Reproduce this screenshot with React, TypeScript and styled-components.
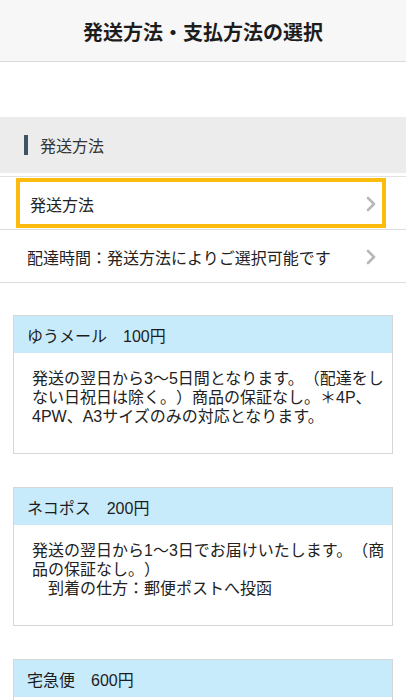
import React from "react";
import styled, { createGlobalStyle } from "styled-components";

const Global = createGlobalStyle`
  html, body { margin: 0; padding: 0; background: #fff; }
  body {
    font-family: "Liberation Sans", "Noto Sans CJK JP", sans-serif;
    color: #222;
    -webkit-font-smoothing: antialiased;
    text-spacing-trim: space-all;
  }
`;

const Page = styled.div`
  width: 406px;
  background: #fff;
`;

const TopBar = styled.header`
  height: 62px;
  background: #f7f7f7;
  border-bottom: 1px solid #dadada;
  display: flex;
  align-items: center;
  justify-content: center;
  font-size: 20px;
  font-weight: 700;
  color: #1d1d1d;
  padding-top: 2px;
  box-sizing: border-box;
`;

const Spacer = styled.div<{ h: number }>`
  height: ${(p) => p.h}px;
`;

const SectionHead = styled.div`
  height: 56px;
  background: #ececec;
  display: flex;
  align-items: center;
  gap: 12px;
  padding-left: 24px;
  font-size: 16px;
  color: #333;
`;

const Bar = styled.span`
  width: 4px;
  height: 20px;
  background: #3e5466;
`;

const List = styled.div`
  border-top: 1px solid #e2e2e2;
  margin-top: 3px;
`;

const Row = styled.div<{ $active?: boolean }>`
  height: 53px;
  border-bottom: 1px solid #dcdcdc;
  box-sizing: border-box;
  display: flex;
  align-items: stretch;
  padding: ${(p) => (p.$active ? "1px 20px 1px 16px" : "0 30px 0 27px")};
`;

const RowInner = styled.div<{ $active?: boolean }>`
  flex: 1;
  display: flex;
  align-items: center;
  justify-content: space-between;
  font-size: 16px;
  color: #222;
  box-sizing: border-box;
  ${(p) =>
    p.$active
      ? `border: 4px solid #fbbc0f; padding: 1px 6px 0 10px;`
      : `padding-top: 2px;`}
`;

const Chevron = () => (
  <svg width="10" height="16" viewBox="0 0 10 16" aria-hidden>
    <path
      d="M2 2 L8 8 L2 14"
      fill="none"
      stroke="#b8b8b8"
      strokeWidth="2.6"
      strokeLinecap="round"
      strokeLinejoin="round"
    />
  </svg>
);

const Cards = styled.div`
  display: flex;
  flex-direction: column;
  gap: 33px;
  padding: 32px 13px 0 13px;
`;

const Card = styled.section`
  border: 1px solid #d6d6d6;
  background: #fff;
`;

const CardHead = styled.div`
  height: 37px;
  background: #c8ebfb;
  display: flex;
  align-items: center;
  padding-left: 13px;
  font-size: 16px;
  color: #1d1d1d;
  white-space: pre;
`;

const CardBody = styled.div`
  padding: 16px 4px 27px 18px;
  font-size: 16px;
  line-height: 19px;
  color: #222;
  white-space: pre-wrap;
  line-break: strict;
`;

const shipping = [
  {
    title: "ゆうメール\u3000100円",
    body:
      "発送の翌日から3〜5日間となります。（配達をしない日祝日は除く。）商品の保証なし。＊4P、4PW、A3サイズのみの対応となります。",
  },
  {
    title: "ネコポス\u3000200円",
    body:
      "発送の翌日から1〜3日でお届けいたします。（商品の保証なし。）\n\u3000到着の仕方：郵便ポストへ投函",
  },
  {
    title: "宅急便\u3000600円",
    body: "発送の翌日から1〜2日でお届けいたします。",
  },
];

export default function App() {
  return (
    <Page>
      <Global />
      <TopBar>発送方法・支払方法の選択</TopBar>
      <Spacer h={55} />
      <SectionHead>
        <Bar />
        発送方法
      </SectionHead>
      <List>
        <Row $active>
          <RowInner $active>
            <span>発送方法</span>
            <Chevron />
          </RowInner>
        </Row>
        <Row>
          <RowInner>
            <span>配達時間：発送方法によりご選択可能です</span>
            <Chevron />
          </RowInner>
        </Row>
      </List>
      <Cards>
        {shipping.map((s) => (
          <Card key={s.title}>
            <CardHead>{s.title}</CardHead>
            <CardBody>{s.body}</CardBody>
          </Card>
        ))}
      </Cards>
    </Page>
  );
}
